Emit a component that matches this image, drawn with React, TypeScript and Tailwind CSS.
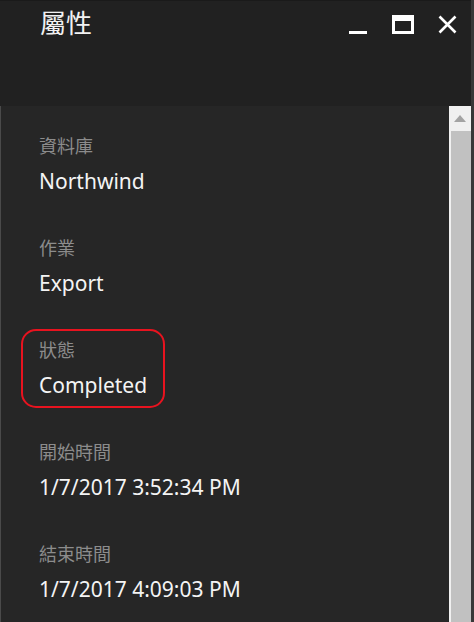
import React from "react";

const items = [
  { label: "資料庫", value: "Northwind" },
  { label: "作業", value: "Export" },
  { label: "狀態", value: "Completed", highlight: true },
  { label: "開始時間", value: "1/7/2017 3:52:34 PM" },
  { label: "結束時間", value: "1/7/2017 4:09:03 PM" },
];

const cjk = "[font-family:'Noto_Sans_CJK_TC','Noto_Sans',sans-serif]";

export default function App() {
  return (
    <div className="w-[474px] h-[622px] overflow-hidden flex bg-[#262626]">
      <div className="flex-1 flex flex-col min-w-0">
        {/* header */}
        <div className="h-[106px] bg-[#212121] border-t border-[#1a1a1a] flex items-start">
          <div className={`pl-[40px] pt-[3px] text-[26px] leading-[36px] text-[#f2f2f2] ${cjk}`}>屬性</div>
          <div className="ml-auto flex items-start pt-[14px] pr-[14px]">
            <button className="w-[18px] h-[19px] mr-[25px] flex items-end">
              <span className="block w-[18px] h-[3px] bg-white" />
            </button>
            <button className="w-[22px] h-[19px] mr-[24px] border-white border-t-[6px] border-x-[3px] border-b-[3px]" />
            <button className="w-[19px] h-[19px]">
              <svg width="19" height="19" viewBox="0 0 19 19">
                <path d="M1.5 1.5 L17.5 17.5 M17.5 1.5 L1.5 17.5" stroke="white" strokeWidth="2.6" />
              </svg>
            </button>
          </div>
        </div>
        {/* body */}
        <div className="flex-1 flex min-h-0">
          <div className="flex-1 border-l border-[#4a4a4a] pl-[38px] pt-[27px] flex flex-col gap-[40px]">
            {items.map((it) => (
              <div key={it.label} className="relative flex flex-col gap-[10px]">
                {it.highlight && (
                  <div className="absolute left-[-18px] top-[-8px] w-[144px] h-[79px] border-[2.5px] border-[#e8131f] rounded-[15px]" />
                )}
                <div className={`text-[18px] leading-[24px] text-[#8c8c8c] ${cjk}`}>{it.label}</div>
                <div className="text-[21px] leading-[28px] text-[#f4f4f4] [font-family:'Noto_Sans',sans-serif]">{it.value}</div>
              </div>
            ))}
          </div>
          {/* scrollbar */}
          <div className="w-[22px] bg-[#f0f0f0] flex flex-col">
            <div className="h-[25px] flex items-center justify-center">
              <svg width="12" height="7" viewBox="0 0 12 7">
                <path d="M6 0 L12 7 L0 7 Z" fill="#a3a3a3" />
              </svg>
            </div>
            <div className="flex-1 ml-[2px] bg-[#c1c1c1]" />
          </div>
        </div>
      </div>
      <div className="w-[3px] bg-[#383838]" />
    </div>
  );
}
